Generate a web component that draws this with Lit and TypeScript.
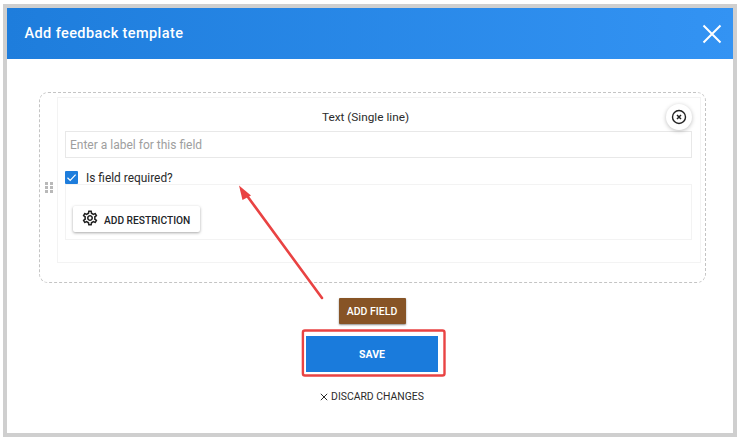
import { LitElement, html, css } from "lit";
import { customElement } from "lit/decorators.js";

@customElement("app-root")
export class AppRoot extends LitElement {
  static styles = css`
    :host { display: block; position: relative; width: 741px; height: 441px; background: #fff; font-family: Roboto, "Liberation Sans", sans-serif; color: #212529; overflow: hidden; }
    .frame { box-sizing: border-box; width: 734px; height: 433px; margin: 0 0 0 3px; position: relative; top: 4px; border: 4px solid #cfcfcf; background: #fff; display: flex; flex-direction: column; }
    .head { height: 51px; flex: none; display: flex; align-items: center; justify-content: space-between; padding: 0 11px 0 17.5px; background: linear-gradient(90deg, #1e7ddc, #3393f3); color: #fff; font-size: 14.5px; font-weight: 500; letter-spacing: .4px; }
    .head svg { width: 20px; height: 20px; display: block; }
    .body { flex: 1; display: flex; flex-direction: column; align-items: center; padding: 33px 0 0 4px; }
    .zone { box-sizing: border-box; width: 667px; height: 191px; margin-left: 1px; border: 1px dashed #c4c4c4; border-radius: 9px; display: flex; align-items: center; padding: 4px 4px 19px 0; }
    .zone-side { width: 17px; flex: none; display: flex; justify-content: center; margin-top: 15px; box-sizing: border-box; }
    .grip { display: grid; grid-template-columns: 3px 3px; gap: 1px 2px; }
    .grip i { width: 3px; height: 3px; background: #b9b9b9; display: block; }
    .card { flex: 1; height: 100%; box-sizing: border-box; border: 1px solid #f3f3f3; padding: 6px 8px 0 7px; }
    .title-row { display: flex; align-items: center; height: 26px; }
    .title { flex: 1; text-align: center; font-size: 11.8px; line-height: 26px; color: #2b2b2b; }
    .x-btn { width: 26px; height: 26px; flex: none; border-radius: 50%; background: #fff; box-shadow: 0 1px 4px rgba(0,0,0,.25); display: flex; align-items: center; justify-content: center; }
    .x-btn svg { width: 16px; height: 16px; display: block; }
    .input { box-sizing: border-box; height: 27px; margin-top: 1px; border: 1px solid #e8e8e8; padding: 2px 4px 0; font-size: 12px; line-height: 23px; color: #9e9e9e; }
    .check-row { display: flex; align-items: flex-start; gap: 8px; height: 26px; font-size: 11.9px; color: #2b2b2b; }
    .check { width: 13px; height: 13px; border-radius: 1px; background: #1e7ddc; display: flex; align-items: center; justify-content: center; margin-top: 13px; flex: none; }
    .check svg { width: 13px; height: 13px; display: block; }
    .check-row span { margin-top: 14px; line-height: 13px; }
    .rules { box-sizing: border-box; height: 56px; border: 1px solid #f3f3f3; padding: 21px 0 0 7px; }
    .restrict { box-sizing: border-box; width: 127px; height: 26px; display: flex; align-items: center; gap: 5px; padding-left: 8px; background: #fff; font-size: 10.2px; font-weight: 500; color: #212529; box-shadow: 0 1px 3px rgba(0,0,0,.35); border-radius: 2px; }
    .restrict svg { width: 18px; height: 18px; display: block; margin-top: -3px; }
    .restrict span { padding-top: 2px; }
    .add { box-sizing: border-box; width: 67px; height: 26px; margin-top: 15px; background: #875426; color: #fff; font-size: 10.5px; font-weight: 500; display: flex; align-items: center; justify-content: center; box-shadow: 0 1px 2px rgba(0,0,0,.45); border-radius: 1px; }
    .save { width: 132px; height: 36px; margin-top: 12px; background: #1a7bdc; color: #fff; font-size: 10.5px; font-weight: 700; display: flex; align-items: center; justify-content: center; }
    .discard { margin-top: 19px; display: flex; align-items: center; gap: 3px; font-size: 10.4px; line-height: 12px; color: #2b2b2b; }
    .discard svg { width: 8px; height: 8px; display: block; }
    .mark { position: absolute; left: 0; top: 0; width: 741px; height: 441px; pointer-events: none; }
  `;

  render() {
    return html`
      <div class="frame">
        <div class="head">
          <span>Add feedback template</span>
          <svg viewBox="0 0 20 20"><path d="M1.500 1.500 18.500 18.500M18.500 1.500 1.500 18.500" stroke="#fff" stroke-width="2" fill="none"/></svg>
        </div>
        <div class="body">
          <div class="zone">
            <div class="zone-side"><div class="grip"><i></i><i></i><i></i><i></i><i></i><i></i></div></div>
            <div class="card">
              <div class="title-row">
                <div class="title">Text (Single line)</div>
                <div class="x-btn"><svg viewBox="0 0 16 16" fill="none"><circle cx="8" cy="8" r="6.500" stroke="#222" stroke-width="1.400"/><path d="M6 6 10 10M10 6 6 10" stroke="#222" stroke-width="1.500"/></svg></div>
              </div>
              <div class="input">Enter a label for this field</div>
              <div class="check-row">
                <div class="check"><svg viewBox="0 0 13 13" fill="none"><path d="M2.500 6.800 5.200 9.400 10.600 3.600" stroke="#fff" stroke-width="1.200"/></svg></div>
                <span>Is field required?</span>
              </div>
              <div class="rules">
                <div class="restrict">
                  <svg viewBox="0 0 24 24" fill="#222"><path d="M19.430 12.980c.04-.32.07-.64.07-.98 0-.34-.03-.66-.07-.98l2.110-1.650c.19-.15.24-.42.12-.64l-2-3.460c-.09-.16-.26-.25-.44-.25-.06 0-.12.01-.17.03l-2.490 1c-.52-.4-1.080-.73-1.690-.98l-.38-2.650C14.460 2.180 14.250 2 14 2h-4c-.25 0-.46.18-.49.42l-.38 2.650c-.61.25-1.170.59-1.690.98l-2.490-1c-.06-.02-.12-.03-.18-.03-.17 0-.34.09-.43.25l-2 3.460c-.13.22-.07.49.12.64l2.110 1.650c-.04.32-.07.65-.07.98 0 .33.03.66.07.98l-2.110 1.650c-.19.15-.24.42-.12.64l2 3.460c.09.16.26.25.44.25.06 0 .12-.01.17-.03l2.490-1c.52.4 1.080.73 1.690.98l.38 2.650c.03.24.24.42.49.42h4c.25 0 .46-.18.49-.42l.38-2.650c.61-.25 1.170-.59 1.690-.98l2.490 1c.06.02.12.03.18.03.17 0 .34-.09.43-.25l2-3.460c.12-.22.07-.49-.12-.64l-2.110-1.650zm-1.980-1.710c.04.31.05.52.05.73 0 .21-.02.43-.05.73l-.14 1.130.89.7 1.080.84-.7 1.210-1.270-.51-1.040-.42-.9.68c-.43.32-.84.56-1.250.73l-1.060.43-.16 1.130-.2 1.350h-1.400l-.19-1.350-.16-1.130-1.060-.43c-.43-.18-.83-.41-1.230-.71l-.91-.7-1.060.43-1.270.51-.7-1.210 1.080-.84.89-.7-.14-1.130c-.03-.31-.05-.54-.05-.74s.02-.43.05-.73l.14-1.130-.89-.7-1.080-.84.7-1.210 1.270.51 1.040.42.9-.68c.43-.32.84-.56 1.250-.73l1.060-.43.16-1.130.2-1.350h1.390l.19 1.350.16 1.130 1.060.43c.43.18.83.41 1.230.71l.91.7 1.060-.43 1.270-.51.7 1.210-1.070.85-.89.7.14 1.130zM12 8c-2.210 0-4 1.790-4 4s1.790 4 4 4 4-1.790 4-4-1.790-4-4-4zm0 6c-1.100 0-2-.9-2-2s.9-2 2-2 2 .9 2 2-.9 2-2 2z"/></svg>
                  <span>ADD RESTRICTION</span>
                </div>
              </div>
            </div>
          </div>
          <div class="add">ADD FIELD</div>
          <div class="save">SAVE</div>
          <div class="discard">
            <svg viewBox="0 0 8 8"><path d="M.8.800 7.200 7.200M7.200.800.800 7.200" stroke="#2b2b2b" stroke-width="1" fill="none"/></svg>
            <span>DISCARD CHANGES</span>
          </div>
        </div>
      </div>
      <svg class="mark" viewBox="0 0 741 441" fill="none">
        <rect x="302.900" y="330.500" width="141.600" height="45" rx="2" stroke="#e94343" stroke-width="2.400"/>
        <path d="M322 298 245 193" stroke="#e94343" stroke-width="2.600" stroke-linecap="round"/>
        <path d="M239 185.500 251 195.500 242.500 200z" fill="#e94343"/>
      </svg>
    `;
  }
}
